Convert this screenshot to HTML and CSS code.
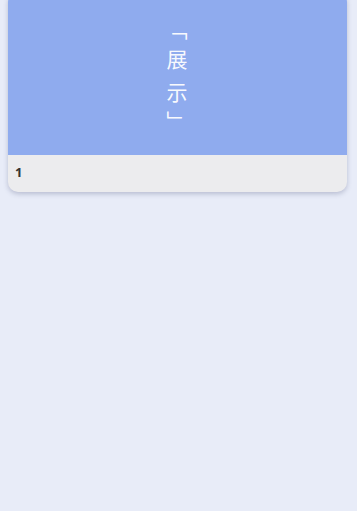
FILE: index.html
```html
<!DOCTYPE html>
<html lang="zh">
<head>
<meta charset="utf-8">
<link rel="stylesheet" href="styles.css">
</head>
<body>
<div class="page">
  <div class="card">
    <div class="cover">
      <div class="title"><span class="open">「</span><span class="first">展</span><span class="last">示</span>」</div>
    </div>
    <div class="footer"><span class="num">1</span></div>
  </div>
</div>
</body>
</html>
```
FILE: styles.css
```css
html, body {
  margin: 0;
  padding: 0;
  background: #e8ecf8;
  height: 100%;
}
.page {
  padding: 0 10px 0 8px;
}
.card {
  margin-top: -8px;
  border-radius: 10px;
  overflow: hidden;
  background: #ececee;
  box-shadow: 0 2px 5px rgba(60, 70, 110, 0.28);
}
.cover {
  height: 163px;
  background: #8fabee;
  display: flex;
  justify-content: center;
  align-items: center;
}
.title {
  writing-mode: vertical-rl;
  font-family: "Noto Sans CJK SC", "Noto Sans", sans-serif;
  font-size: 21px;
  letter-spacing: 12px;
  color: rgba(255, 255, 255, 0.95);
  line-height: 1;
  margin-top: 15px;
  margin-left: -2px;
}
.open {
  letter-spacing: 9px;
}
.first {
  letter-spacing: 12px;
}
.last {
  letter-spacing: 8px;
}
.footer {
  height: 37px;
  display: flex;
  align-items: center;
  padding-left: 7px;
  padding-bottom: 3px;
  box-sizing: border-box;
}
.num {
  font-family: "Open Sans", "Noto Sans", sans-serif;
  font-weight: 700;
  font-size: 13px;
  color: #333;
}
```
